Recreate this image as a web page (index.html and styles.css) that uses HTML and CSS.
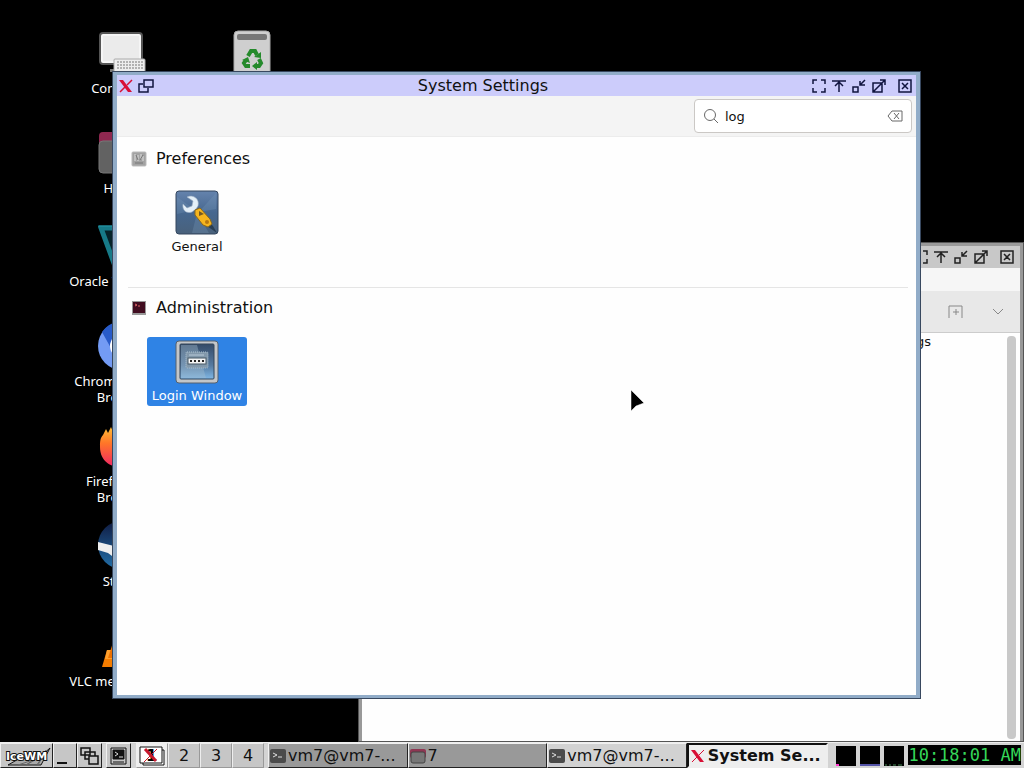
FILE: index.html
```html
<!DOCTYPE html>
<html lang="en">
<head>
    <meta charset="UTF-8">
    <meta name="viewport" content="width=device-width, initial-scale=1.0">
    <title>System Settings</title>
    <link rel="stylesheet" href="styles.css">
</head>
<body>
    <svg class="symbols" aria-hidden="true">
        <symbol id="full" viewBox="0 0 14 14"><path d="M1 5V1h4M9 1h4v4M13 9v4H9M5 13H1V9"/></symbol>
        <symbol id="rollup" viewBox="0 0 14 14"><path d="M0 2h14M7 3v10M3 7l4-4 4 4"/></symbol>
        <symbol id="minimize" viewBox="0 0 14 14"><path d="M1 8h5v5H1zM13 1L8 6M8 2v4h5"/></symbol>
        <symbol id="maximize" viewBox="0 0 14 14"><path d="M1 4h9v9H1zM1 13L13 1M8 1h5v5"/></symbol>
        <symbol id="close" viewBox="0 0 14 14"><path d="M1 1h12v12H1zM4 4l6 6M10 4l-6 6"/></symbol>
        <symbol id="xlogo" viewBox="0 0 16 14"><path d="M1 1h4l9 12h-4z" fill="#d80f35"/><path d="M14 1L9 6M7 8l-5 5" fill="none" stroke="#d80f35"/></symbol>
        <symbol id="terminal" viewBox="0 0 16 16"><rect y="1" width="16" height="14" rx="2" fill="#4b4b4b"/><path d="M3 5l4 2-4 2M8 9h4" fill="none" stroke="#ddd"/></symbol>
    </svg>

    <main class="desktop">
        <a href="#" class="shortcut computer">
            <svg viewBox="0 0 48 48"><rect x="2" y="5" width="42" height="31" rx="3" fill="#eee" stroke="#555" stroke-width="2"/><rect x="4" y="7" width="38" height="27" rx="1" fill="#ebebeb" stroke="#fff"/><path d="M12 41h18v3H12z" fill="#777"/><rect x="16" y="31" width="31" height="14" rx="1" fill="#eee" stroke="#aaa"/><path d="M19 34h26M19 37h26M19 40h26" stroke="#777" stroke-dasharray="2 1"/></svg>
            <span>Computer</span>
        </a>
        <a href="#" class="shortcut trash" aria-label="Trash">
            <svg viewBox="0 0 48 48"><rect x="6" y="3" width="36" height="48" rx="4" fill="#cfcfcf" stroke="#aaa"/><rect x="9" y="6" width="30" height="6" rx="2" fill="#777"/><g fill="none" stroke="#258a2b" stroke-width="4"><path d="M20 28l3-5h4l2 4M31 31l2 4-2 3h-3M22 38h-4l-2-3 2-3"/></g><path d="M26 29l7-5 0 6zM29 34v8l-5-4zM14 32l6-3 2 6z" fill="#258a2b"/></svg>
        </a>
        <a href="#" class="shortcut home">
            <svg viewBox="0 0 48 48"><rect x="1" y="4" width="46" height="22" rx="4" fill="#8f2850"/><rect x="1" y="13" width="46" height="32" rx="4" fill="#626262" stroke="#777"/></svg>
            <span>Home</span>
        </a>
        <a href="#" class="shortcut oracle">
            <svg viewBox="0 0 48 48"><path d="M3 7h42L31 45H17z" fill="#06232a" stroke="#177a88" stroke-width="5"/><path d="M1 5h46" stroke="#2697a7"/></svg>
            <span>Oracle VirtualBox</span>
        </a>
        <a href="#" class="shortcut chromium">
            <svg viewBox="0 0 48 48"><circle cx="24" cy="25" r="24" fill="#739bf4"/><path d="M4 11A24 24 0 0 1 46 15H24L14 29z" fill="#285bc9"/><circle cx="24" cy="25" r="12" fill="#fff"/><circle cx="24" cy="25" r="8" fill="#4e86ed"/></svg>
            <span>Chromium Web Browser</span>
        </a>
        <a href="#" class="shortcut firefox">
            <svg viewBox="0 0 48 48"><defs><linearGradient id="fire" x2="0" y2="1"><stop offset="0" stop-color="#ffbd35"/><stop offset=".4" stop-color="#ff7628"/><stop offset="1" stop-color="#f02565"/></linearGradient></defs><path d="M5 14l3-6 2 4 3-6 2 5c12-10 32-1 31 15-1 26-44 28-44 0 0-5 0-9 3-12z" fill="url(#fire)"/></svg>
            <span>Firefox Web Browser</span>
        </a>
        <a href="#" class="shortcut steam">
            <svg viewBox="0 0 48 48"><defs><linearGradient id="night" x2="0" y2="1"><stop offset="0" stop-color="#101b42"/><stop offset="1" stop-color="#2370a9"/></linearGradient></defs><circle cx="24" cy="24" r="24" fill="url(#night)"/><path d="M0 21l20 5 10-10 5 8-13 12-8-1-4-3-10-3z" fill="#eee"/></svg>
            <span>Steam</span>
        </a>
        <a href="#" class="shortcut vlc">
            <svg viewBox="0 0 48 48"><path d="M9 29h30l5 17H4z" fill="#f57d00"/><path d="M9 29h30l3 9H7z" fill="#ffa02d"/><path d="M20 6h8l10 31H10z" fill="#ee7100"/><path d="M17 16h14l3 9H14z" fill="#eee"/></svg>
            <span>VLC media player</span>
        </a>

        <section class="window files" aria-label="Files">
            <header class="titlebar">
                <div class="controls">
                    <button aria-label="Fullscreen"><svg><use href="#full"/></svg></button>
                    <button aria-label="Roll up"><svg><use href="#rollup"/></svg></button>
                    <button aria-label="Minimize"><svg><use href="#minimize"/></svg></button>
                    <button aria-label="Maximize"><svg><use href="#maximize"/></svg></button>
                    <button class="close" aria-label="Close"><svg><use href="#close"/></svg></button>
                </div>
            </header>
            <div class="menubar"></div>
            <div class="tabbar">
                <button aria-label="New tab"><svg viewBox="0 0 16 14"><path d="M1 13V1h13v12M5 7h6M8 4v6"/></svg></button>
                <button aria-label="Tabs menu"><svg viewBox="0 0 16 14"><path d="M3 4l5 5 5-5"/></svg></button>
            </div>
            <div class="listing">
                <p>Settings</p>
                <div class="scrollbar"><div class="thumb"></div></div>
            </div>
        </section>

        <section class="window settings" aria-label="System Settings">
            <header class="titlebar">
                <div class="window-menu">
                    <svg class="x"><use href="#xlogo"/></svg>
                    <button aria-label="Window menu"><svg viewBox="0 0 16 14"><path d="M6 1h9v7H6zM5 5H1v8h9V9"/></svg></button>
                </div>
                <h1>System Settings</h1>
                <div class="controls">
                    <button aria-label="Fullscreen"><svg><use href="#full"/></svg></button>
                    <button aria-label="Roll up"><svg><use href="#rollup"/></svg></button>
                    <button aria-label="Minimize"><svg><use href="#minimize"/></svg></button>
                    <button aria-label="Maximize"><svg><use href="#maximize"/></svg></button>
                    <button class="close" aria-label="Close"><svg><use href="#close"/></svg></button>
                </div>
            </header>
            <div class="toolbar">
                <div class="search">
                    <label for="search" aria-label="Search"><svg viewBox="0 0 16 16"><circle cx="7" cy="7" r="5.5"/><path d="M11 11l4 4"/></svg></label>
                    <input id="search" type="text" value="log">
                    <button aria-label="Clear"><svg viewBox="0 0 16 16"><path d="M5 3h10v10H5L1 8zM7 5l5 6M12 5l-5 6"/></svg></button>
                </div>
            </div>
            <div class="content">
                <section class="category">
                    <h2><svg viewBox="0 0 16 16"><rect x="1" y="1" width="14" height="14" rx="1" fill="#a2a2a2" stroke="#bbb"/><path d="M4 3v7M7 4v6M10 3v5M12 5v5" stroke="#ddd"/><path d="M4 12h8M5 4l2 5M9 9l3-5" stroke="#777"/></svg>Preferences</h2>
                    <a href="#" class="item">
                        <svg viewBox="0 0 48 48"><defs><linearGradient id="blue" x2="0" y2="1"><stop offset="0" stop-color="#6583ad"/><stop offset=".5" stop-color="#46678f"/><stop offset="1" stop-color="#49617b"/></linearGradient></defs><rect x="3" y="2" width="42" height="43" rx="3" fill="url(#blue)" stroke="#34475f"/><path d="M4 25l18-4L4 8zM24 24l-5 20h17zM26 23L43 4v16z" fill="#7898bb" opacity=".3"/><path d="M22 20l18 17 4 7-13-9z" fill="#293e54"/><path d="M14 8c6-3 13 2 11 9l-2 3-4 3c-6 2-10-2-9-8l4 4 5-2 1-5z" fill="#e4eff8" stroke="#9daec3" stroke-width=".6"/><path d="M22 21l5-2 10 11 2 5-4 3-5-2-8-10z" fill="#f6b51e" stroke="#8a681c"/><path d="M26 22l5 3-5 2z" fill="#765a24"/><circle cx="34" cy="33" r="2" fill="#b77912"/></svg>
                        <span>General</span>
                    </a>
                </section>
                <section class="category">
                    <h2><svg viewBox="0 0 16 16"><rect x="1" y="1" width="14" height="14" fill="#999"/><rect x="2" y="2" width="12" height="11" fill="#410d20"/><path d="M4 4l2 1-2 1M7 6h2" fill="none" stroke="#d66"/></svg>Administration</h2>
                    <a href="#" class="item selected">
                        <svg viewBox="0 0 48 48"><defs><linearGradient id="screen" x2="0" y2="1"><stop offset="0" stop-color="#354b68"/><stop offset=".6" stop-color="#55799f"/><stop offset="1" stop-color="#80b7e5"/></linearGradient></defs><rect x="3" y="3" width="42" height="42" rx="3" fill="#c3c6c9" stroke="#56616c"/><rect x="7" y="6" width="34" height="35" rx="1" fill="url(#screen)" stroke="#34475b"/><path d="M8 7h16l9 33H8z" fill="#a6bdd0" opacity=".4"/><rect x="13" y="14" width="22" height="16" rx="1" fill="#8298ab" stroke="#abc1d1" stroke-dasharray="1 1"/><path d="M16 17h15" stroke="#b8c9d7"/><rect x="15" y="20" width="18" height="6" fill="#f3f3f3" stroke="#465866"/><path d="M17 23h14" stroke="#222" stroke-width="2" stroke-dasharray="2 2"/></svg>
                        <span>Login Window</span>
                    </a>
                </section>
            </div>
        </section>

        <svg class="pointer" viewBox="0 0 14 24"><path d="M1 1v21l5-5 8-3z" stroke="#fff" stroke-width=".5"/></svg>
    </main>

    <footer class="taskbar">
        <div class="launchers">
            <button class="start" aria-label="IceWM menu"><svg viewBox="0 0 48 22"><path d="M5 20L19 12l6 3 9-7 4 3 9-8-9 17z" fill="#aaa"/><path d="M15 20l15-5-7 5 18-10-8 11M43 5l-8 15" fill="none" stroke="#666"/><text x="3" y="15">IceWM</text></svg></button>
            <button class="show" aria-label="Show desktop"><svg viewBox="0 0 22 22"><path d="M3 18h10" stroke-width="2"/></svg></button>
            <button aria-label="Window list"><svg viewBox="0 0 22 22"><path d="M2 3h9v7H2zM6 7h10v7H6z" stroke-width="1.5"/><path d="M10 11h9v8h-9z" fill="#c6c6c6" stroke-width="1.5"/></svg></button>
            <button class="term" aria-label="Terminal"><svg viewBox="0 0 22 22"><path d="M3 3h15v16H3z"/><path d="M5 5h11v9H5z" fill="#111"/><path d="M7 7l3 2-3 2M11 12h4" stroke="#ddd"/><path d="M5 17h11"/></svg></button>
        </div>
        <nav class="workspaces" aria-label="Workspaces">
            <button class="active" aria-label="Workspace 1"><svg viewBox="0 0 30 22"><path d="M6 5h21v15H6z" fill="#fff" stroke="#111"/><path d="M3 2h22v16H3z" fill="#fff" stroke="#111"/><text x="9" y="16">1</text><path d="M8 4l11 12" stroke="#c8182d" stroke-width="3"/><path d="M20 4L7 17" stroke="#c8182d"/></svg></button>
            <button>2</button>
            <button>3</button>
            <button>4</button>
        </nav>
        <div class="tasks">
            <button><svg><use href="#terminal"/></svg><span>vm7@vm7-...</span></button>
            <button><svg viewBox="0 0 16 16"><rect y="1" width="16" height="9" rx="2" fill="#8e3652"/><rect x="1" y="4" width="14" height="11" rx="2" fill="#777" stroke="#444"/></svg><span>7</span></button>
            <button class="light"><svg><use href="#terminal"/></svg><span>vm7@vm7-...</span></button>
            <button class="current"><svg><use href="#xlogo"/></svg><span>System Se...</span></button>
        </div>
        <div class="monitors">
            <svg viewBox="0 0 20 20"><path d="M0 18h3v2H0z" fill="#f3c"/></svg>
            <svg viewBox="0 0 20 20"><path d="M0 18h20v2H0z" fill="#5353a6"/></svg>
            <svg viewBox="0 0 20 20"><path d="M1 19h2M5 19h2M9 19h3M14 19h4" stroke="#485"/></svg>
        </div>
        <time class="clock">10:18:01 AM</time>
    </footer>
</body>
</html>
```
FILE: styles.css
```css
*{box-sizing: border-box;}
body{margin: 0; height: 100vh; display: flex; flex-direction: column; background: black; color: #111; font-family: "DejaVu Sans", sans-serif; font-size: 13px; overflow: hidden;}
button{padding: 0; border: 0; background: none; color: inherit; font: inherit;}
svg{display: block; flex: none;}
h1, h2, p{margin: 0; font-weight: normal; font-size: 16px;}
a{color: inherit; text-decoration: none;}
.symbols{position: absolute; width: 0; height: 0;}
.desktop{position: relative; flex: 1; min-height: 0; overflow: hidden;}

/* desktop shortcuts */
.shortcut{position: absolute; left: 67px; width: 110px; display: flex; flex-direction: column; align-items: center; gap: 4px; color: white; font-family: "Noto Sans", sans-serif; line-height: 16px; text-align: center;}
.shortcut svg{width: 48px; height: 48px;}
.computer{top: 28px;}
.trash{left: 197px; top: 28px;}
.home{top: 128px;}
.oracle{top: 221px;}
.chromium{top: 321px;}
.firefox{top: 421px;}
.steam{top: 521px;}
.vlc{top: 621px;}

/* windows */
.window{position: absolute; display: flex; flex-direction: column; background: #fefefe;}
.settings{left: 113px; right: 104px; top: 72px; bottom: 44px; border: 4px solid #91acc8; border-top-width: 3px; border-bottom-width: 3px; outline: 1px solid #38485f;}
.files{left: 358px; right: 0; top: 242px; bottom: 0; border: 4px solid #999; border-bottom: 0; outline: 1px solid #555; outline-offset: -1px;}
.titlebar{height: 21px; display: flex; align-items: center; background: #ccccfb; color: #11143f;}
.titlebar h1{flex: 1; line-height: 21px; color: #111; text-align: center;}
.files .titlebar{height: 22px; justify-content: flex-end; background: #c8c8c8; color: #222;}
.titlebar svg{width: 14px; height: 14px; fill: none; stroke: currentColor; stroke-width: 1.5;}
.window-menu{display: flex; gap: 4px; padding-left: 1px;}
.window-menu svg{width: 16px;}
.window-menu .x{stroke: none;}
.controls{display: flex; gap: 6px; padding-right: 4px;}
.files .controls{padding-right: 6px;}
.controls .close{margin-left: 6px;}
.toolbar{height: 41px; display: flex; justify-content: flex-end; align-items: center; padding-right: 4px; background: #f4f4f4; border-bottom: 1px solid #ececec;}
.search{width: 218px; height: 34px; display: flex; align-items: center; gap: 6px; padding: 0 8px; background: white; border: 1px solid #cbc8c5; border-radius: 4px;}
.search svg{width: 16px; height: 16px; fill: none; stroke: #686868;}
.search input{flex: 1; min-width: 0; padding: 0; border: 0; outline: 0; background: none; color: #111; font: inherit;}
.content{flex: 1; padding: 10px 8px 0 11px;}
.category{height: 140px;}
.category + .category{border-top: 1px solid #e5e5e5; padding-top: 8px;}
.category h2{display: flex; align-items: center; gap: 9px; padding-left: 3px; line-height: 24px;}
.category h2 svg{width: 16px; height: 16px;}
.item{width: 100px; height: 69px; margin: 17px 0 0 19px; padding-top: 1px; display: flex; flex-direction: column; align-items: center; border-radius: 3px; line-height: 20px;}
.item svg{width: 48px; height: 48px;}
.selected{background: #2f83e5; color: white;}

/* file manager behind */
.menubar{height: 23px; background: #f6f6f6;}
.tabbar{height: 42px; display: flex; justify-content: flex-end; align-items: center; gap: 26px; padding-right: 14px; background: #e8e8e8; border-bottom: 1px solid #ccc;}
.tabbar svg{width: 16px; height: 14px; fill: none; stroke: #888;}
.listing{flex: 1; display: flex; justify-content: flex-end; gap: 72px;}
.listing p{font-size: 13px; line-height: 18px;}
.scrollbar{width: 17px; padding: 3px 4px;}
.thumb{height: 100%; border-radius: 4px; background: #c9c9c9;}
.pointer{position: absolute; left: 630px; top: 389px; width: 14px; height: 24px;}

/* taskbar */
.taskbar{height: 26px; display: flex; align-items: stretch; padding-right: 3px; background: #d3d3d3; border-top: 1px solid #eee; font-size: 16px;}
.taskbar button{display: flex; align-items: center; justify-content: center; border: 1px solid; border-color: #f0f0f0 #222 #222 #f0f0f0; background: #c6c6c6;}
.launchers{display: flex;}
.launchers button{width: 25px;}
.launchers .start{width: 53px;}
.launchers .show{width: 24px;}
.launchers .term{margin-left: 4px;}
.launchers svg{width: 22px; height: 22px; fill: none; stroke: #111;}
.launchers .start svg{width: 48px;}
.start text{fill: white; stroke: #111; stroke-width: 2px; paint-order: stroke; font-size: 11px; font-weight: bold;}
.workspaces{display: flex; padding-left: 5px;}
.taskbar .workspaces button{width: 32px; border-color: #eee #999 #999 #eee;}
.taskbar .workspaces .active{background: #eee;}
.workspaces svg{width: 30px; height: 22px;}
.workspaces text{font-weight: bold;}
.tasks{flex: 1; display: flex; min-width: 0; margin-left: 4px;}
.taskbar .tasks button{flex: 1; min-width: 0; justify-content: flex-start; gap: 2px; padding-left: 1px; background: #999; white-space: nowrap; overflow: hidden;}
.tasks svg{width: 16px; height: 16px;}
.taskbar .tasks .light{background: #d2d2d2;}
.taskbar .tasks .current{background: #eee; border-color: #111 #eee #eee #111; border-width: 2px; font-weight: bold;}
.monitors{display: flex; align-items: center; gap: 4px; padding: 0 4px 0 8px;}
.monitors svg{width: 20px; height: 20px; background: black;}
.clock{height: 20px; margin-top: 2px; background: black; color: #35d759; font: 17px/20px "DejaVu Sans Mono", monospace;}
```
